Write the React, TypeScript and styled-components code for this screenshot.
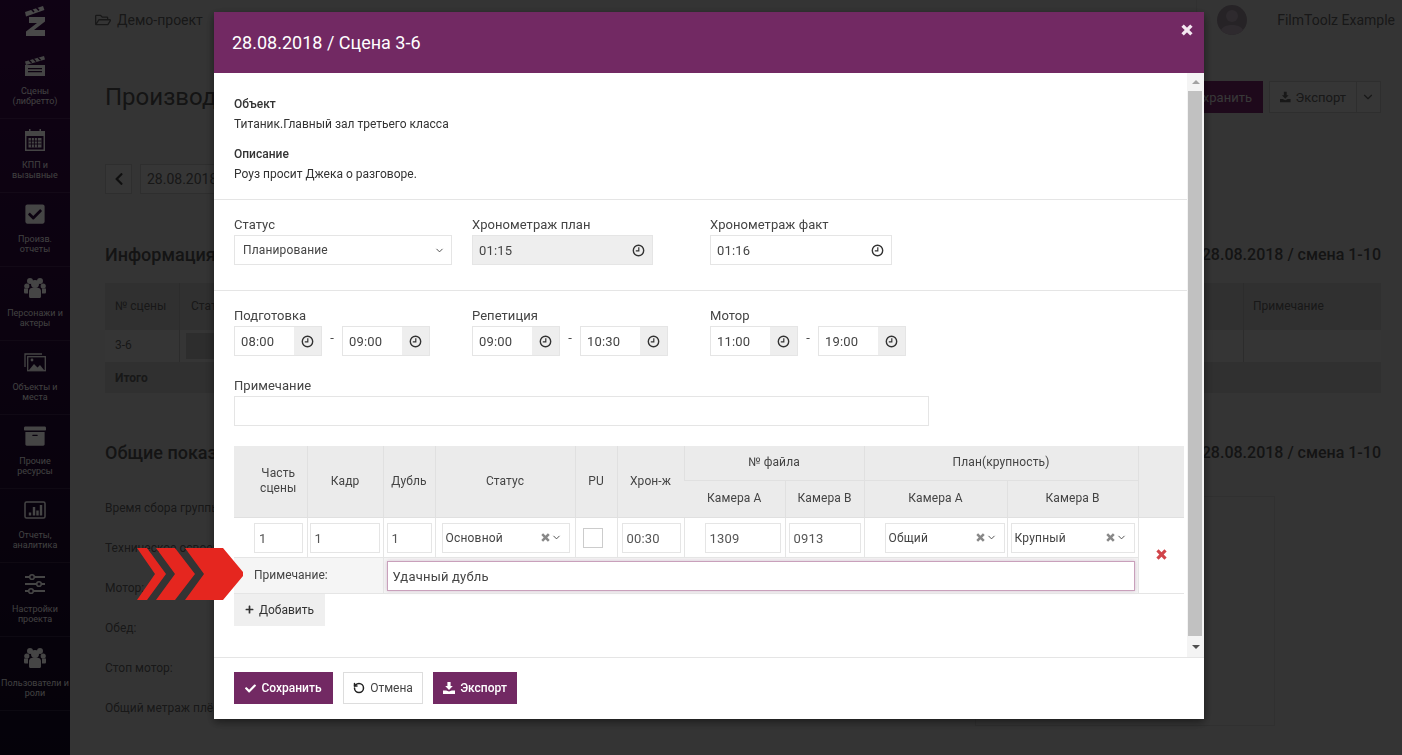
import React from "react";
import styled, { createGlobalStyle } from "styled-components";
import { ChevronDown, RotateCcw } from "lucide-react";
import {
  FaArchive,
  FaCheck,
  FaCheckSquare,
  FaChevronLeft,
  FaPlus,
  FaRegFolderOpen,
} from "react-icons/fa";

const PURPLE = "#722963";
const LINE = "#e5e5e5";

const GlobalStyle = createGlobalStyle`
  html, body {
    margin: 0;
    height: 100%;
    overflow: hidden;
  }
  body {
    font-family: Roboto, "Liberation Sans", sans-serif;
    font-size: 13px;
    color: #333;
    background: #b0b0b0;
  }
  * {
    box-sizing: border-box;
  }
`;

/* page behind the dialog */

const Page = styled.div`
  display: flex;
  height: 755px;
  overflow: hidden;
  color: #505050;
`;

const Sidebar = styled.nav`
  width: 70px;
  flex: none;
  background: linear-gradient(180deg, #350743 0%, #110721 100%);
`;

const LogoBox = styled.div`
  height: 45px;
  padding-top: 5px;
  display: flex;
  justify-content: center;
  color: #f4f4f4;
`;

const NavItem = styled.a`
  height: 74px;
  padding-top: 10px;
  display: flex;
  flex-direction: column;
  align-items: center;
  border-bottom: 1px solid rgba(255, 255, 255, 0.1);
  color: #d8d8d8;
  font-size: 9px;
  line-height: 10px;
  text-align: center;
  white-space: nowrap;

  svg {
    height: 22px;
    width: 22px;
    margin-bottom: 9px;
    flex: none;
    color: #e6e6e6;
  }
`;

const Main = styled.main`
  flex: 1;
  min-width: 0;
`;

const TopBar = styled.header`
  height: 46px;
  display: flex;
  align-items: center;
  padding: 0 7px 0 25px;
  font-size: 14px;
  gap: 6px;
`;

const ProjectName = styled.div`
  display: flex;
  align-items: center;
  gap: 6px;
  padding-bottom: 6px;
  flex: 1;
`;

const UserBlock = styled.div`
  align-self: stretch;
  display: flex;
  align-items: center;
  padding: 0 0 6px 20px;
  border-left: 1px solid #a4a4a4;
`;

const Avatar = styled.div`
  width: 30px;
  height: 30px;
  border-radius: 50%;
  background: #7f757f;
  margin-right: 30px;
  overflow: hidden;
`;

const Content = styled.div`
  padding: 20px 21px 0 35px;
`;

const TitleRow = styled.div`
  display: flex;
  align-items: center;
  height: 64px;
  padding-bottom: 2px;
`;

const PageTitle = styled.h1`
  margin: 0 auto 0 0;
  white-space: nowrap;
  font-size: 24px;
  font-weight: 400;
  color: #444;
`;

const GhostButton = styled.div`
  height: 32px;
  display: inline-flex;
  align-items: center;
  gap: 5px;
  padding: 0 10px;
  background: #b4b4b4;
  border: 1px solid #9a9a9a;
`;

const PurpleGhost = styled(GhostButton)`
  background: #67215d;
  border-color: #67215d;
  color: #bbb;
  width: 98px;
  justify-content: flex-end;
  margin-right: 6px;
`;

const ExportPart = styled(GhostButton)`
  width: 88px;
`;

const CaretPart = styled(GhostButton)`
  width: 24px;
  padding: 0 4px;
  border-left: 0;
`;

const DateRow = styled.div`
  display: flex;
  gap: 8px;
  margin-top: 34px;
`;

const DateButton = styled(GhostButton)`
  height: 30px;
  width: 27px;
  padding: 0;
  justify-content: center;
  color: #333;
`;

const DateBox = styled(GhostButton)`
  height: 30px;
  width: 120px;
  padding: 0 6px;
  font-size: 14px;
`;

const SectionHead = styled.div<{ $top: number }>`
  display: flex;
  justify-content: space-between;
  align-items: center;
  margin-top: ${(p) => p.$top}px;
  font-size: 18px;
  line-height: 22px;
  font-weight: 500;
  color: #444;
`;

const ShiftLabel = styled.span`
  font-size: 16px;
`;

const BgTable = styled.div`
  margin-top: 17px;
  font-size: 12px;
`;

const BgRow = styled.div<{ $h: number; $shade: string }>`
  height: ${(p) => p.$h}px;
  display: flex;
  align-items: center;
  background: ${(p) => p.$shade};
`;

const BgCell = styled.span`
  width: 75px;
  height: 100%;
  display: flex;
  align-items: center;
  padding: 0 0 2px 10px;
  border-right: 1px solid #949494;
`;

const BgStatus = styled.span`
  padding: 0 0 2px 11px;
`;

const BgTotal = styled.b`
  padding-left: 10px;
`;

const BgNote = styled.span`
  width: 138px;
  height: 100%;
  margin-left: auto;
  display: flex;
  align-items: center;
  padding: 0 0 2px 9px;
  border-left: 1px solid #949494;
`;

const StatusChip = styled.span`
  width: 60px;
  height: 26px;
  margin-left: 6px;
  background: #969696;
`;

const StatsBlock = styled.div`
  margin-top: 30px;
  display: flex;
  justify-content: space-between;
`;

const StatsList = styled.div`
  display: flex;
  flex-direction: column;
  gap: 26px;
  font-size: 12px;
  line-height: 14px;
  padding-top: 7px;
`;

const StatsPanel = styled.div`
  width: 300px;
  height: 230px;
  margin-top: 2px;
  margin-right: 106px;
  border: 1px solid #a0a0a0;
`;

/* dialog */

const Overlay = styled.div`
  position: fixed;
  inset: 0;
  background: rgba(0, 0, 0, 0.7);
  padding: 12px 0 0 214px;
`;

const Dialog = styled.div`
  width: 990px;
  height: 707px;
  background: #fff;
  display: flex;
  flex-direction: column;
  box-shadow: 0 3px 9px rgba(0, 0, 0, 0.5);
`;

const DialogHead = styled.div`
  height: 61px;
  flex: none;
  background: ${PURPLE};
  color: #fff;
  display: flex;
  justify-content: space-between;
  padding: 20px 11px 0 18px;
`;

const DialogTitle = styled.h4`
  margin: 0;
  font-size: 18px;
  line-height: 21px;
  font-weight: 400;
`;

const CloseMark = styled.span`
  display: flex;
  margin-top: -8px;
  height: 12px;
  color: #f4e8f1;
`;

const DialogMiddle = styled.div`
  flex: 1;
  min-height: 0;
  display: flex;
`;

const Scrolled = styled.div`
  flex: 1;
  min-width: 0;
`;

const ScrollTrack = styled.div`
  width: 17px;
  flex: none;
  display: flex;
  flex-direction: column;
  align-items: center;
  background: #f4f4f4;
`;

const ScrollArrow = styled.div<{ $up?: boolean }>`
  flex: none;
  width: 0;
  height: 0;
  border-left: 4px solid transparent;
  border-right: 4px solid transparent;
  ${(p) =>
    p.$up
      ? `border-bottom: 4px solid #a3a3a3; margin: 7px 0 7px;`
      : `border-top: 4px solid #505050; margin: 9px 0 8px;`}
`;

const ScrollThumb = styled.div`
  width: 14px;
  flex: 1;
  align-self: flex-start;
  margin-left: 1px;
  background: #c1c1c1;
`;

const InfoBlock = styled.section`
  padding: 24px 20px 0;
  height: 127px;
  border-bottom: 1px solid ${LINE};
  font-size: 12px;
  line-height: 14px;
`;

const InfoLabel = styled.div`
  font-weight: 500;
`;

const InfoText = styled.div`
  margin-top: 6px;
  margin-bottom: 16px;
`;

const FieldBlock = styled.section<{ $h: number }>`
  height: ${(p) => p.$h}px;
  padding: 17px 20px 0;
`;

const FieldRow = styled.div`
  display: flex;
  align-items: flex-start;
`;

const Field = styled.div<{ $w: number; $top?: number }>`
  width: ${(p) => p.$w}px;
  margin-top: ${(p) => p.$top ?? 0}px;
  flex: none;
`;

const Label = styled.label`
  display: block;
  font-size: 13px;
  line-height: 15px;
  margin-bottom: 3px;
  letter-spacing: 0.05px;
  color: #444;
`;

const Box = styled.div<{ $w?: number; $disabled?: boolean }>`
  width: ${(p) => (p.$w ? `${p.$w}px` : "100%")};
  height: 30px;
  display: flex;
  align-items: center;
  border: 1px solid ${LINE};
  background: ${(p) => (p.$disabled ? "#eeeeee" : "#fff")};
  color: #444;
  font-size: 13px;
`;

const TimeText = styled.span`
  flex: 1;
  padding-left: 6px;
  letter-spacing: 0.2px;
  padding-top: 1px;
`;

const SelectText = styled.span`
  flex: 1;
  padding-left: 8px;
  font-size: 12px;
  letter-spacing: 0.15px;
`;

const AddonBtn = styled.span<{ $grey?: boolean }>`
  width: 27px;
  height: 100%;
  flex: none;
  display: flex;
  align-items: center;
  justify-content: center;
  background: ${(p) => (p.$grey ? "#eeeeee" : "transparent")};
  padding-top: 1px;
`;

const SelectCaret = styled(AddonBtn)`
  padding-left: 3px;
`;

const Dash = styled.span`
  width: 20px;
  flex: none;
  text-align: center;
  line-height: 24px;
  color: #444;
`;

const Rule = styled.div`
  height: 1px;
  background: ${LINE};
`;

const TimePair = styled.div`
  display: flex;
`;

const Shots = styled.table`
  margin: 0 0 0 20px;
  width: 950px;
  table-layout: fixed;
  border-collapse: collapse;
  font-size: 12px;
  color: #444;
`;

const HeadRow = styled.tr<{ $h: number }>`
  height: ${(p) => p.$h}px;
`;

const Th = styled.th`
  background: #ebebeb;
  font-weight: 400;
  text-align: center;
  line-height: 15px;
  padding: 0 4px;
  border-left: 1px solid #e0e0e0;
  border-bottom: 1px solid #e0e0e0;
  letter-spacing: 0.1px;

  &:first-child {
    border-left: 0;
  }
`;

const LeadTh = styled(Th)`
  padding-left: 20px;
`;

const Td = styled.td<{ $l?: number; $r?: number }>`
  padding: 5px ${(p) => p.$r ?? 3}px 4px ${(p) => p.$l ?? 3}px;
  border-left: 1px solid ${LINE};
  border-bottom: 1px solid ${LINE};
  vertical-align: middle;
  height: 40px;

  &:first-child {
    border-left: 0;
  }
`;

const NoteLabelCell = styled.td`
  height: 36px;
  padding: 0 0 0 20px;
  background: #f5f5f5;
  border-bottom: 1px solid ${LINE};
  border-right: 1px solid ${LINE};
`;

const NoteInputCell = styled.td`
  padding: 2px 3px 0;
  background: #f5f5f5;
  border-bottom: 1px solid ${LINE};
`;

const DeleteCell = styled.td`
  text-align: center;
  color: #d1444a;
  padding-top: 2px;
  border-bottom: 1px solid ${LINE};
  border-left: 1px solid ${LINE};
`;

const CellInput = styled.div`
  height: 30px;
  display: flex;
  align-items: center;
  padding: 1px 4px 0;
  border: 1px solid ${LINE};
  background: #fff;
  font-size: 13px;
  letter-spacing: 0.2px;
  color: #555;
`;

const CellSelect = styled(CellInput)`
  padding: 0 7px 0 3px;
  font-size: 12px;
  color: #444;
`;

const CellSelectText = styled.span`
  flex: 1;
`;

const ClearMark = styled.span`
  display: flex;
  color: #888;
  margin-right: 1px;
`;

const CheckBoxMark = styled.div`
  width: 20px;
  height: 20px;
  margin-left: 4px;
  border: 1px solid #ccc;
  background: #fff;
`;

const NoteInput = styled.div`
  height: 30px;
  display: flex;
  align-items: center;
  padding: 1px 5px 0;
  border: 1px solid #c9a0bb;
  box-shadow: 0 0 4px rgba(114, 41, 99, 0.25);
  background: #fff;
  font-size: 13px;
  letter-spacing: 0.2px;
  color: #444;
`;

const AddButton = styled.div`
  margin-left: 20px;
  width: 91px;
  height: 32px;
  display: flex;
  align-items: center;
  justify-content: center;
  gap: 5px;
  background: #efefef;
  font-size: 12px;
  color: #333;
`;

const DialogFoot = styled.div`
  height: 62px;
  flex: none;
  border-top: 1px solid ${LINE};
  padding: 14px 20px 0;
  display: flex;
  gap: 10px;
`;

const FootButton = styled.div<{ $w: number; $light?: boolean }>`
  width: ${(p) => p.$w}px;
  height: 32px;
  display: flex;
  align-items: center;
  justify-content: center;
  gap: 5px;
  font-size: 12px;
  font-weight: ${(p) => (p.$light ? 400 : 500)};
  background: ${(p) => (p.$light ? "#fff" : PURPLE)};
  color: ${(p) => (p.$light ? "#444" : "#fff")};
  border: 1px solid ${(p) => (p.$light ? "#ddd" : PURPLE)};
`;

const Chevrons = styled.svg`
  position: fixed;
  left: 137px;
  top: 548px;
`;

/* drawings */

const Clock = () => (
  <svg width="13" height="13" viewBox="0 0 13 13" fill="none" stroke="#333" strokeWidth="1.4">
    <circle cx="6.5" cy="6.5" r="5.2" />
    <path d="M6.8 3.2v3.6H3.8" strokeWidth="1.2" />
  </svg>
);

const BoldX = ({ size }: { size: number }) => (
  <svg width={size} height={size} viewBox="0 0 12 12" fill="none" stroke="currentColor" strokeWidth="3.4">
    <path d="M1.6 1.6l8.8 8.8M10.4 1.6l-8.8 8.8" />
  </svg>
);

const SaveGlyph = () => (
  <svg width="12" height="12" viewBox="0 0 12 12" fill="currentColor">
    <path d="M4.4 0h3.2v4h2.2L6 8 2.2 4h2.2z" />
    <path d="M0 8.4h3.2L6 9.6l2.8-1.2H12V12H0z" />
  </svg>
);

const Small = () => <ChevronDown size={11} strokeWidth={2} color="#444" />;

const Logo = () => (
  <svg width="21" height="31" viewBox="0 0 21 31" fill="currentColor">
    <path d="M0 7 18 1l1.4 4L1 11.5z" />
    <path d="M6 3.8 9 7M11 2.2l3 3.2" stroke="#350743" strokeWidth="1.6" />
    <path d="M4 12h16v4.5L9 25h11v6H1v-4.5L12 18H4z" />
  </svg>
);

const Clapper = () => (
  <svg viewBox="0 0 22 22" fill="currentColor">
    <path d="M1 6.5 20 1l1 3.6L2 10z" />
    <path d="M5 5.2l2.6 2.6M9.5 4l2.6 2.6M14 2.6l2.6 2.6" stroke="#2d0739" strokeWidth="1.3" />
    <path d="M1 10h20v11H1z" />
    <path d="M4 13h14v1.2H4zM4 16h14v1.2H4z" fill="#2d0739" />
  </svg>
);

const Calendar = () => (
  <svg viewBox="0 0 22 22" fill="currentColor">
    <path d="M1 2h20v20H1zM2.5 7v13.5h17V7z" fillRule="evenodd" />
    <path d="M4.5 9h13v9.5h-13z" />
    <path d="M7.4 9v9.5M10.4 9v9.5M13.4 9v9.5M4.5 12h13M4.5 15h13" stroke="#2d0739" strokeWidth="0.9" />
    <path d="M5 0h1.5v3H5zM15.5 0H17v3h-1.5z" />
  </svg>
);

const People = () => (
  <svg viewBox="0 0 22 22" fill="currentColor">
    <circle cx="6" cy="4" r="3" />
    <circle cx="16" cy="4" r="3" />
    <circle cx="2.8" cy="9" r="2.6" />
    <circle cx="19.2" cy="9" r="2.6" />
    <circle cx="11" cy="7" r="4" />
    <path d="M5 14c0-2.6 2.4-3.6 6-3.6s6 1 6 3.6v5.4c0 1-.8 1.6-2 1.6H7c-1.200 0-2-.6-2-1.600z" />
    <path d="M0 11.500h4v5H1.500C.5 16.500 0 16 0 15zM22 11.500h-4v5h2.500c1 0 1.500-.5 1.500-1.500z" />
  </svg>
);

const Pictures = () => (
  <svg viewBox="0 0 22 22" fill="none" stroke="currentColor" strokeWidth="1.3">
    <path d="M1 16V3h17" />
    <rect x="3.700" y="5.700" width="17.600" height="14" />
    <path d="M5 19l5-6 3.500 3.500L16 14l4 5z" fill="currentColor" stroke="none" />
    <circle cx="8" cy="9" r="1.400" fill="currentColor" stroke="none" />
  </svg>
);

const Bars = () => (
  <svg viewBox="0 0 22 22" fill="none" stroke="currentColor">
    <rect x="1" y="3" width="20" height="16" rx="1.500" strokeWidth="1.500" />
    <path d="M6 16.500v-3M10 16.500V8M13.500 16.500v-5M17 16.500V6" strokeWidth="2.400" />
  </svg>
);

const Sliders = () => (
  <svg viewBox="0 0 22 22" fill="none" stroke="currentColor" strokeWidth="2">
    <path d="M1 4h20M1 11h20M1 18h20" />
    <circle cx="8" cy="4" r="2.300" fill="#1f0730" strokeWidth="1.600" />
    <circle cx="15" cy="11" r="2.300" fill="#1f0730" strokeWidth="1.600" />
    <circle cx="7" cy="18" r="2.300" fill="#1f0730" strokeWidth="1.600" />
  </svg>
);

const Silhouette = () => (
  <svg width="30" height="30" viewBox="0 0 30 30" fill="#998c99">
    <circle cx="15" cy="11" r="6" />
    <path d="M3 30c0-8 6-10 12-10s12 2 12 10z" />
  </svg>
);

const NAV = [
  { icon: <Clapper />, text: ["Сцены", "(либретто)"] },
  { icon: <Calendar />, text: ["КПП и", "вызывные"] },
  { icon: <FaCheckSquare />, text: ["Произв.", "отчеты"] },
  { icon: <People />, text: ["Персонажи и", "актеры"] },
  { icon: <Pictures />, text: ["Объекты и", "места"] },
  { icon: <FaArchive />, text: ["Прочие", "ресурсы"] },
  { icon: <Bars />, text: ["Отчеты,", "аналитика"] },
  { icon: <Sliders />, text: ["Настройки", "проекта"] },
  { icon: <People />, text: ["Пользователи и", "роли"] },
];

const STATS = [
  "Время сбора группы:",
  "Техническое освоение:",
  "Мотор:",
  "Обед:",
  "Стоп мотор:",
  "Общий метраж плёнки:",
];

const COLS = [73, 76, 52, 140, 42, 67, 101, 79, 143, 131, 46];

const TimeRange = ({ from, to }: { from: string; to: string }) => (
  <TimePair>
    <Box $w={88}>
      <TimeText>{from}</TimeText>
      <AddonBtn $grey>
        <Clock />
      </AddonBtn>
    </Box>
    <Dash>-</Dash>
    <Box $w={88}>
      <TimeText>{to}</TimeText>
      <AddonBtn $grey>
        <Clock />
      </AddonBtn>
    </Box>
  </TimePair>
);

const ShotSelect = ({ value }: { value: string }) => (
  <CellSelect>
    <CellSelectText>{value}</CellSelectText>
    <ClearMark>
      <BoldX size={9} />
    </ClearMark>
    <Small />
  </CellSelect>
);

const App: React.FC = () => (
  <>
    <GlobalStyle />
    <Page>
      <Sidebar>
        <LogoBox>
          <Logo />
        </LogoBox>
        {NAV.map((item) => (
          <NavItem key={item.text[0]}>
            {item.icon}
            {item.text[0]}
            <br />
            {item.text[1]}
          </NavItem>
        ))}
      </Sidebar>
      <Main>
        <TopBar>
          <ProjectName>
            <FaRegFolderOpen size={16} />
            Демо-проект
          </ProjectName>
          <UserBlock>
            <Avatar>
              <Silhouette />
            </Avatar>
            FilmToolz Example
          </UserBlock>
        </TopBar>
        <Content>
          <TitleRow>
            <PageTitle>Производственный отчет</PageTitle>
            <PurpleGhost>Сохранить</PurpleGhost>
            <ExportPart>
              <SaveGlyph />
              Экспорт
            </ExportPart>
            <CaretPart>
              <ChevronDown size={14} />
            </CaretPart>
          </TitleRow>
          <DateRow>
            <DateButton>
              <FaChevronLeft size={14} />
            </DateButton>
            <DateBox>28.08.2018</DateBox>
          </DateRow>
          <SectionHead $top={50}>
            <span>Информация</span>
            <ShiftLabel>28.08.2018 / смена 1-10</ShiftLabel>
          </SectionHead>
          <BgTable>
            <BgRow $h={47} $shade="#a2a2a2">
              <BgCell>№ сцены</BgCell>
              <BgStatus>Статус</BgStatus>
              <BgNote>Примечание</BgNote>
            </BgRow>
            <BgRow $h={32} $shade="#b2b2b2">
              <BgCell>3-6</BgCell>
              <StatusChip />
              <BgNote />
            </BgRow>
            <BgRow $h={31} $shade="#a0a0a0">
              <BgTotal>Итого</BgTotal>
            </BgRow>
          </BgTable>
          <SectionHead $top={49}>
            <span>Общие показатели</span>
            <ShiftLabel>28.08.2018 / смена 1-10</ShiftLabel>
          </SectionHead>
          <StatsBlock>
            <StatsList>
              {STATS.map((s) => (
                <span key={s}>{s}</span>
              ))}
            </StatsList>
            <StatsPanel />
          </StatsBlock>
        </Content>
      </Main>
    </Page>

    <Overlay>
      <Dialog>
        <DialogHead>
          <DialogTitle>28.08.2018 / Сцена 3-6</DialogTitle>
          <CloseMark>
            <BoldX size={12} />
          </CloseMark>
        </DialogHead>
        <DialogMiddle>
          <Scrolled>
            <InfoBlock>
              <InfoLabel>Объект</InfoLabel>
              <InfoText>Титаник.Главный зал третьего класса</InfoText>
              <InfoLabel>Описание</InfoLabel>
              <InfoText>Роуз просит Джека о разговоре.</InfoText>
            </InfoBlock>

            <FieldBlock $h={90}>
              <FieldRow>
                <Field $w={238}>
                  <Label>Статус</Label>
                  <Box $w={218}>
                    <SelectText>Планирование</SelectText>
                    <SelectCaret>
                      <Small />
                    </SelectCaret>
                  </Box>
                </Field>
                <Field $w={238}>
                  <Label>Хронометраж план</Label>
                  <Box $w={181} $disabled>
                    <TimeText>01:15</TimeText>
                    <AddonBtn>
                      <Clock />
                    </AddonBtn>
                  </Box>
                </Field>
                <Field $w={238}>
                  <Label>Хронометраж факт</Label>
                  <Box $w={182}>
                    <TimeText>01:16</TimeText>
                    <AddonBtn>
                      <Clock />
                    </AddonBtn>
                  </Box>
                </Field>
              </FieldRow>
            </FieldBlock>
            <Rule />

            <FieldBlock $h={155}>
              <FieldRow>
                <Field $w={238}>
                  <Label>Подготовка</Label>
                  <TimeRange from="08:00" to="09:00" />
                </Field>
                <Field $w={238}>
                  <Label>Репетиция</Label>
                  <TimeRange from="09:00" to="10:30" />
                </Field>
                <Field $w={238}>
                  <Label>Мотор</Label>
                  <TimeRange from="11:00" to="19:00" />
                </Field>
              </FieldRow>
              <Field $w={695} $top={22}>
                <Label>Примечание</Label>
                <Box />
              </Field>
            </FieldBlock>

            <Shots>
              <colgroup>
                {COLS.map((w, i) => (
                  <col key={i} width={w} />
                ))}
              </colgroup>
              <thead>
                <HeadRow $h={34}>
                  <LeadTh rowSpan={2}>
                    Часть
                    <br />
                    сцены
                  </LeadTh>
                  <Th rowSpan={2}>Кадр</Th>
                  <Th rowSpan={2}>Дубль</Th>
                  <Th rowSpan={2}>Статус</Th>
                  <Th rowSpan={2}>PU</Th>
                  <Th rowSpan={2}>Хрон-ж</Th>
                  <Th colSpan={2}>№ файла</Th>
                  <Th colSpan={2}>План(крупность)</Th>
                  <Th rowSpan={2} />
                </HeadRow>
                <HeadRow $h={37}>
                  <Th>Камера А</Th>
                  <Th>Камера В</Th>
                  <Th>Камера А</Th>
                  <Th>Камера В</Th>
                </HeadRow>
              </thead>
              <tbody>
                <tr>
                  <Td $l={20} $r={4}>
                    <CellInput>1</CellInput>
                  </Td>
                  <Td $l={2}>
                    <CellInput>1</CellInput>
                  </Td>
                  <Td>
                    <CellInput>1</CellInput>
                  </Td>
                  <Td $l={6} $r={5}>
                    <ShotSelect value="Основной" />
                  </Td>
                  <Td>
                    <CheckBoxMark />
                  </Td>
                  <Td $l={4}>
                    <CellInput>00:30</CellInput>
                  </Td>
                  <Td $l={20} $r={4}>
                    <CellInput>1309</CellInput>
                  </Td>
                  <Td>
                    <CellInput>0913</CellInput>
                  </Td>
                  <Td $l={20} $r={2}>
                    <ShotSelect value="Общий" />
                  </Td>
                  <Td>
                    <ShotSelect value="Крупный" />
                  </Td>
                  <DeleteCell rowSpan={2}>
                    <BoldX size={11} />
                  </DeleteCell>
                </tr>
                <tr>
                  <NoteLabelCell colSpan={2}>Примечание:</NoteLabelCell>
                  <NoteInputCell colSpan={8}>
                    <NoteInput>Удачный дубль</NoteInput>
                  </NoteInputCell>
                </tr>
              </tbody>
            </Shots>
            <AddButton>
              <FaPlus size={9} />
              Добавить
            </AddButton>
          </Scrolled>
          <ScrollTrack>
            <ScrollArrow $up />
            <ScrollThumb />
            <ScrollArrow />
          </ScrollTrack>
        </DialogMiddle>
        <DialogFoot>
          <FootButton $w={99}>
            <FaCheck size={11} />
            Сохранить
          </FootButton>
          <FootButton $w={80} $light>
            <RotateCcw size={12} strokeWidth={3} color="#222" />
            Отмена
          </FootButton>
          <FootButton $w={84}>
            <SaveGlyph />
            Экспорт
          </FootButton>
        </DialogFoot>
      </Dialog>
    </Overlay>

    <Chevrons width="107" height="52" viewBox="0 0 107 52" fill="#e5261f">
      <path d="M0 0h10l19 26-19 26H0l18-26z" />
      <path d="M19 0h19l20 26-20 26H19l19-26z" />
      <path d="M48 0h38l20 24v4L86 52H48l19-26z" />
    </Chevrons>
  </>
);

export default App;
